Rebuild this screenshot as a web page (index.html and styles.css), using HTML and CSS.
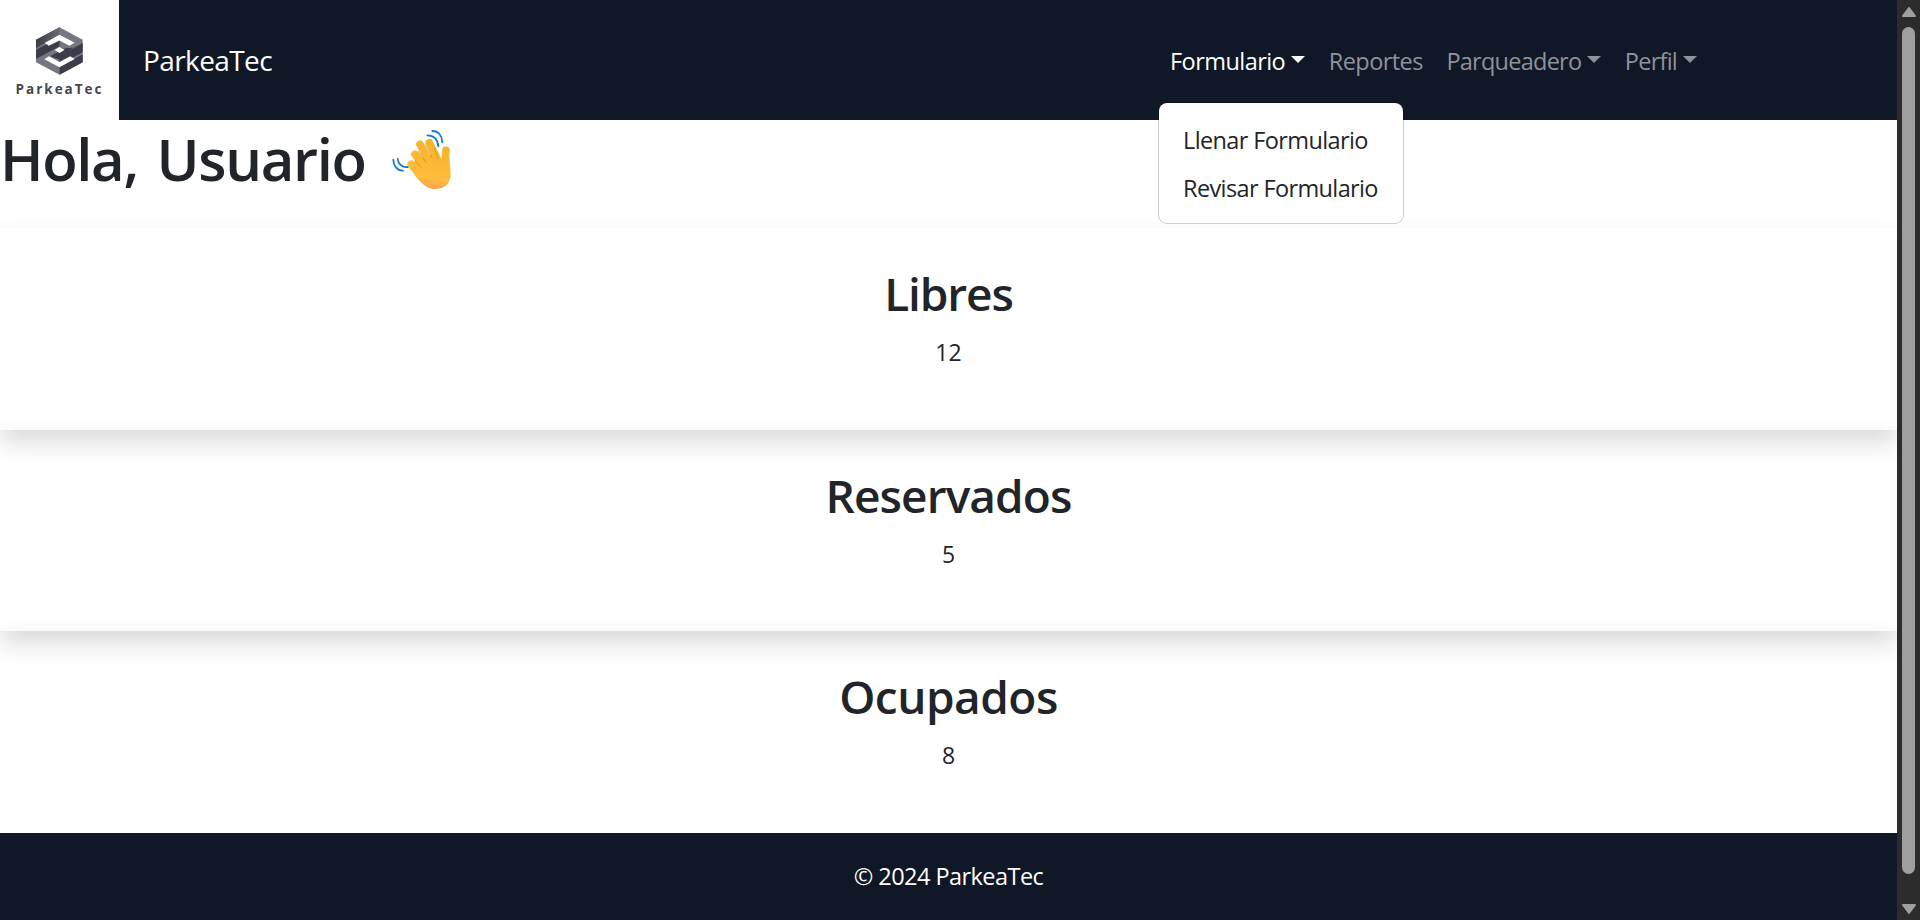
FILE: index.html
```html
<!DOCTYPE html>
<html lang="es">
<head>
<meta charset="utf-8">
<title>ParkeaTec</title>
<link rel="stylesheet" href="styles.css">
</head>
<body>
<div class="viewport">
  <div class="page">
    <nav class="navbar">
      <div class="logo">
        <svg class="logo-mark" viewBox="7 8 142 144">
          <defs>
            <linearGradient id="fold"><stop offset="0" stop-color="#3b3e48"/><stop offset="1" stop-color="#676a72"/></linearGradient>
          </defs>
          <path fill="#747780" d="M78 8 148 46V114L78 152 7 114V46z"/>
          <path fill="url(#fold)" d="M78 8V32L35 56 7 71V46z"/>
          <path fill="#3b3e48" d="M148 90V114L78 152V128L122 104z"/>
          <path fill="#3b3e48" d="M7 76 78 40V66L7 104z"/>
          <path fill="#3b3e48" d="M148 56V84L78 120V94z"/>
          <path fill="#3b3e48" d="M50 96 78 81 98 71 118 70 78 106z"/>
          <path fill="#fff" d="M78 31 124 55 108 64 78 48 46 64 33 56z"/>
          <path fill="#fff" d="M78 129 32 105 46 96 78 113 110 96 124 104z"/>
          <path fill="#fff" d="M78 68 93 77 78 86 63 77z"/>
        </svg>
        <span class="logo-text">ParkeaTec</span>
      </div>
      <a class="brand">ParkeaTec</a>
      <ul class="menu">
        <li class="item open"><a class="link link-form">Formulario</a><i class="caret"></i>
          <div class="dropdown">
            <a class="option">Llenar Formulario</a>
            <a class="option">Revisar Formulario</a>
          </div>
        </li>
        <li class="item"><a class="link link-rep">Reportes</a></li>
        <li class="item"><a class="link link-park">Parqueadero</a><i class="caret"></i></li>
        <li class="item"><a class="link link-perfil">Perfil</a><i class="caret"></i></li>
      </ul>
    </nav>
    <header class="greeting">
      <h1 class="hello">Hola, Usuario</h1>
      <svg class="wave" viewBox="21 18 180 180">
        <defs>
          <linearGradient id="skin" gradientUnits="userSpaceOnUse" x1="150" y1="50" x2="125" y2="200">
            <stop offset="0" stop-color="#f4b32a"/><stop offset=".75" stop-color="#ffbd3e"/><stop offset="1" stop-color="#f79a55"/>
          </linearGradient>
        </defs>
        <g fill="none" stroke="url(#skin)" stroke-width="23" stroke-linecap="round">
          <path d="M133 56 160 112"/><path d="M105 61 138 124"/><path d="M90 91 122 136"/><path d="M79 121 112 154"/><path d="M183 79 178 128"/>
        </g>
        <path fill="url(#skin)" d="M70 128 100 105 122 98 146 88C154 108 163 120 168 109L176 95 194 100C192 118 198 132 197 152C196 180 176 195 150 195C130 195 114 182 98 164Z"/>
        <g fill="none" stroke="#d98a1c" stroke-width="3" stroke-linecap="round" opacity=".75">
          <path d="M121 62 142 103"/><path d="M100 82 124 116"/><path d="M90 109 110 131"/><path d="M147 72 160 104"/>
        </g>
        <g fill="none" stroke="#1a7cc9" stroke-width="5.500" stroke-linecap="round">
          <path d="M142 21C160 21 171 34 172 55"/><path d="M127 34C146 34 158 46 160 67"/>
          <path d="M25 107C25 125 36 140 54 140"/><path d="M38 105C39 119 51 131 68 129"/>
        </g>
      </svg>
    </header>
    <main class="cards">
      <section class="card"><h2 class="title title-free">Libres</h2><p class="count">12</p></section>
      <section class="card"><h2 class="title">Reservados</h2><p class="count">5</p></section>
      <section class="card"><h2 class="title title-busy">Ocupados</h2><p class="count">8</p></section>
    </main>
    <footer class="footer"><p class="copy">© 2024 ParkeaTec</p></footer>
  </div>
  <div class="scrollbar">
    <svg class="arrow" viewBox="0 0 16 12"><path d="M8 2 14 10H2z"/></svg>
    <div class="thumb"></div>
    <svg class="arrow" viewBox="0 0 16 12"><path d="M8 10 14 2H2z"/></svg>
  </div>
</div>
</body>
</html>
```
FILE: styles.css
```css
* { box-sizing: border-box; }
body { margin: 0; font: 24px/36px "Open Sans", "Noto Sans", sans-serif; color: #212529; background: #fff; }
h1, h2, p, ul { margin: 0; padding: 0; }
.viewport { display: flex; width: 1920px; height: 920px; overflow: hidden; }
.page { width: 1897px; height: 920px; display: flex; flex-direction: column; }
.navbar { height: 120px; flex: none; display: flex; align-items: center; background: #101726; position: relative; z-index: 2; }
.logo { width: 119px; height: 120px; background: #fff; display: flex; flex-direction: column; align-items: center; padding-top: 27px; }
.logo-mark { width: 47px; height: 48px; display: block; }
.logo-text { font: 700 13.500px/16px "Open Sans", sans-serif; letter-spacing: 2px; color: #45474f; margin: 6px 0 0; }
.brand { margin-left: 24px; width: 1027px; font-size: 28px; color: #fff; letter-spacing: -.6px; }
.menu { list-style: none; display: flex; gap: 23.500px; color: #8f929a; padding-top: 1px; }
.item { position: relative; display: flex; align-items: center; }
.open { color: #fff; }
.link { font-size: 23.500px; letter-spacing: -.4px; }
.link-form, .link-rep { letter-spacing: -.55px; }
.link-park, .link-perfil { letter-spacing: -.75px; }
.caret { margin-left: 6px; margin-top: -3px; border: 7px solid transparent; border-top-color: currentColor; border-bottom: 0; }
.dropdown { position: absolute; left: -12px; top: 59px; width: 246px; height: 122px; padding: 13px 0 0; background: #fff; background-clip: padding-box; border: 1px solid rgba(0,0,0,.18); border-radius: 9px; color: #212529; }
.option { display: block; height: 48px; padding: 6px 24px; font-size: 23.500px; letter-spacing: -.62px; white-space: nowrap; }
.greeting { height: 108px; flex: none; display: flex; }
.hello { font-size: 58px; line-height: 72px; font-weight: 600; padding-top: 3px; width: 392px; white-space: nowrap; letter-spacing: -1.350px; word-spacing: 5px; }
.wave { width: 60px; height: 60px; margin-top: 10px; flex: none; }
.cards { height: 605px; flex: none; display: grid; grid-template-rows: repeat(3, 1fr); }
.card { padding-top: 36px; text-align: center; box-shadow: 0 12px 24px rgba(0,0,0,.15); }
.title { font-size: 46px; line-height: 58px; font-weight: 600; letter-spacing: -.9px; }
.title-free { letter-spacing: -1.100px; }
.title-busy { letter-spacing: -.5px; }
.count { margin-top: 12px; font-size: 23px; }
.footer { height: 87px; flex: none; position: relative; background: #101726; color: #fff; text-align: center; padding-top: 25px; }
.copy { font-size: 23.500px; letter-spacing: -.55px; }
.scrollbar { width: 23px; height: 920px; background: #2c2c2c; display: flex; flex-direction: column; align-items: center; padding: 5px 0 4px; }
.arrow { width: 16px; height: 14px; fill: #9f9f9f; stroke: #9f9f9f; stroke-width: 2; stroke-linejoin: round; flex: none; }
.thumb { width: 13px; height: 847px; margin: 8px 0 auto; border-radius: 7px; background: #9f9f9f; }
```
